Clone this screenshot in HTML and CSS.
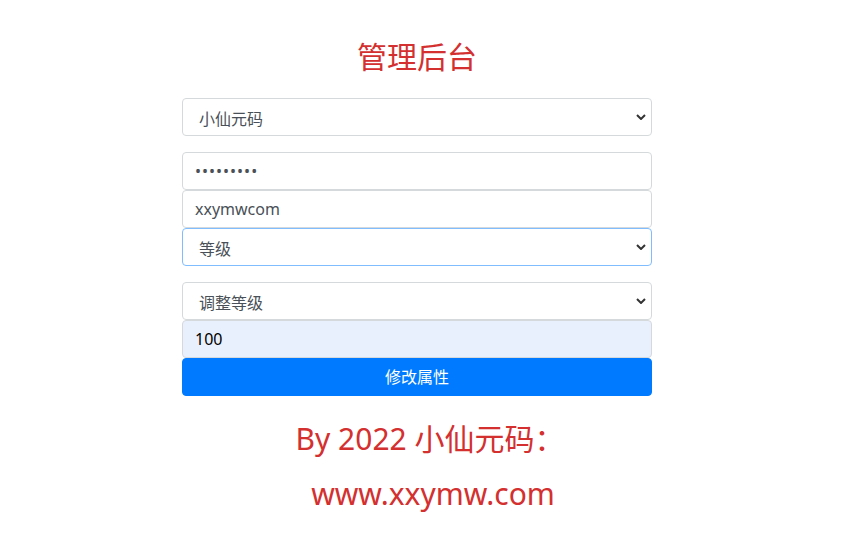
FILE: index.html
```html
<!DOCTYPE html>
<html lang="zh-CN">
<head>
<meta charset="utf-8">
<title>管理后台</title>
<link rel="stylesheet" href="styles.css">
</head>
<body>
<div class="page">
  <div class="panel">
    <h1 class="title">管理后台</h1>
    <form class="form">
      <select class="ctl ctl-select gap">
        <option>小仙元码</option>
      </select>
      <input class="ctl ctl-pass" type="password" value="123456789">
      <input class="ctl" type="text" value="xxymwcom">
      <select class="ctl ctl-select ctl-focus gap">
        <option>等级</option>
      </select>
      <select class="ctl ctl-select">
        <option>调整等级</option>
      </select>
      <input class="ctl ctl-fill" type="text" value="100">
      <button class="btn" type="button">修改属性</button>
    </form>
  </div>
  <p class="foot foot-1">By 2022 小仙元码：</p>
  <p class="foot foot-2">www.xxymw.com</p>
</div>
</body>
</html>
```

FILE: styles.css
```css
html, body {
  margin: 0;
  padding: 0;
  background: #fff;
}
body {
  font-family: "Noto Sans", "Noto Sans CJK SC", sans-serif;
}
.page {
  width: 846px;
  display: flex;
  flex-direction: column;
  align-items: center;
}
.panel {
  width: 470px;
  margin-right: 12px;
  display: flex;
  flex-direction: column;
}
.title {
  margin: 0;
  padding-top: 37px;
  margin-bottom: 21px;
  font-size: 30px;
  line-height: 40px;
  font-weight: 400;
  color: #d3302f;
  text-align: center;
}
.form {
  display: flex;
  flex-direction: column;
}
.ctl {
  box-sizing: border-box;
  display: block;
  width: 100%;
  height: 38px;
  margin: 0;
  padding: 6px 12px;
  font-family: "Noto Sans", "Noto Sans CJK SC", sans-serif;
  font-size: 16px;
  line-height: 24px;
  color: #495057;
  background: #fff;
  border: 1px solid #d6d9dc;
  border-radius: 4px;
  outline: none;
}
.ctl-pass {
  letter-spacing: 1px;
}
.ctl-select {
  appearance: none;
  -webkit-appearance: none;
  padding-left: 16px;
  padding-top: 8px;
  padding-bottom: 4px;
  background-image: url("data:image/svg+xml,%3Csvg xmlns='http://www.w3.org/2000/svg' width='10' height='6' viewBox='0 0 10 6'%3E%3Cpath d='M1 1l4 4 4-4' fill='none' stroke='%23333' stroke-width='2'/%3E%3C/svg%3E");
  background-repeat: no-repeat;
  background-position: right 5px center;
  background-size: 10px 6px;
}
.ctl-focus {
  border-color: #80bdff;
}
.ctl-fill {
  background: #e8f0fe;
  color: #000;
}
.gap {
  margin-bottom: 16px;
}
.btn {
  box-sizing: border-box;
  width: 100%;
  height: 38px;
  margin: 0;
  padding: 6px 12px;
  border: 1px solid #007bff;
  border-radius: 4px;
  background: #007bff;
  color: #fff;
  font-family: "Noto Sans", "Noto Sans CJK SC", sans-serif;
  font-size: 16px;
  line-height: 24px;
}
.foot {
  margin: 0;
  font-size: 30px;
  line-height: 40px;
  color: #d3302f;
  text-align: center;
}
.foot-1 {
  margin-top: 23px;
  padding-left: 14px;
}
.foot-2 {
  margin-top: 15px;
  padding-left: 20px;
}
```
